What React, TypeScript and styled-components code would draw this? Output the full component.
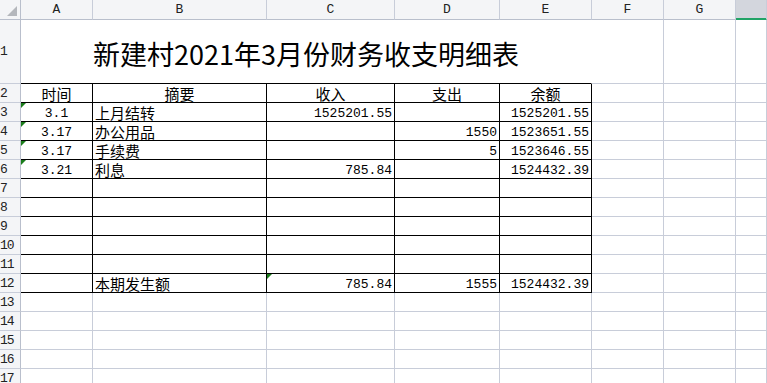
import styled, { createGlobalStyle } from "styled-components";

const GRID = "#c8cdd9";
const HEAD_LINE = "#b9bfcc";
const HEAD_BG = "#f4f5f7";

const GlobalStyle = createGlobalStyle`
  html, body {
    margin: 0;
    padding: 0;
    background: #fff;
  }
  body {
    font-family: "Liberation Mono", "Noto Sans CJK SC", monospace;
    color: #000;
  }
`;

const Sheet = styled.div`
  display: grid;
  grid-template-columns: 21px 72px 174px 128px 105px 92px 72px 72px 1fr;
  grid-template-rows: 20px 64px repeat(16, 19px);
  width: 767px;
  height: 383px;
  overflow: hidden;
`;

const Corner = styled.div`
  background: ${HEAD_BG};
  border-right: 1px solid ${HEAD_LINE};
  border-bottom: 1px solid ${HEAD_LINE};
  display: flex;
  align-items: flex-end;
  justify-content: flex-end;
  padding: 0 3px 3px 0;
`;

const ColHead = styled.div<{ $active?: boolean }>`
  background: ${({ $active }) => ($active ? "#d3d6dd" : HEAD_BG)};
  border-right: 1px solid ${GRID};
  border-bottom: 1px solid ${({ $active }) => ($active ? "#21a366" : HEAD_LINE)};
  box-shadow: ${({ $active }) => ($active ? "inset 0 -1px 0 #21a366" : "none")};
  font: 13px "Liberation Mono", monospace;
  color: #222;
  display: flex;
  align-items: center;
  justify-content: center;
`;

const RowHead = styled.div`
  background: ${HEAD_BG};
  border-right: 1px solid ${HEAD_LINE};
  border-bottom: 1px solid ${GRID};
  font: 13px "Liberation Mono", monospace;
  color: #222;
  display: flex;
  align-items: center;
  overflow: hidden;
  letter-spacing: -1px;
`;

const Cell = styled.div<{ $ruled?: boolean; $align?: "left" | "center" | "right"; $num?: boolean }>`
  position: relative;
  border-right: 1px solid ${({ $ruled }) => ($ruled ? "#000" : GRID)};
  border-bottom: 1px solid ${({ $ruled }) => ($ruled ? "#000" : GRID)};
  display: flex;
  align-items: flex-end;
  justify-content: ${({ $align }) =>
    $align === "center" ? "center" : $align === "right" ? "flex-end" : "flex-start"};
  padding: 0 2px 1px;
  font-family: ${({ $num }) =>
    $num ? `"Liberation Mono", monospace` : `"Noto Sans CJK SC", sans-serif`};
  font-size: ${({ $num }) => ($num ? "13px" : "15px")};
  line-height: 1;
  white-space: nowrap;
  overflow: hidden;
`;

const TitleCell = styled.div`
  grid-column: 2 / 7;
  border-right: 1px solid #fff;
  border-bottom: 1px solid #000;
  display: flex;
  align-items: center;
  justify-content: center;
  padding-top: 4px;
  font-family: "Noto Sans CJK SC", sans-serif;
  font-size: 27px;
  line-height: 1;
`;

const Flag = styled.span`
  position: absolute;
  top: 0;
  left: 0;
  width: 0;
  height: 0;
  border-top: 5px solid #1b7d1b;
  border-right: 5px solid transparent;
`;

const LETTERS = ["A", "B", "C", "D", "E", "F", "G", ""];

type Row = { cells: string[]; flag?: number };

const HEADER = ["时间", "摘要", "收入", "支出", "余额"];

const BODY: Row[] = [
  { cells: ["3.1", "上月结转", "1525201.55", "", "1525201.55"], flag: 0 },
  { cells: ["3.17", "办公用品", "", "1550", "1523651.55"], flag: 0 },
  { cells: ["3.17", "手续费", "", "5", "1523646.55"], flag: 0 },
  { cells: ["3.21", "利息", "785.84", "", "1524432.39"], flag: 0 },
  { cells: ["", "", "", "", ""] },
  { cells: ["", "", "", "", ""] },
  { cells: ["", "", "", "", ""] },
  { cells: ["", "", "", "", ""] },
  { cells: ["", "", "", "", ""] },
  { cells: ["", "本期发生额", "785.84", "1555", "1524432.39"], flag: 2 },
];

const BODY_ALIGN: ("center" | "left" | "right")[] = ["center", "left", "right", "right", "right"];

const CornerMark = () => (
  <svg width="10" height="10" viewBox="0 0 10 10">
    <polygon points="10,0 10,10 0,10" fill="#b4b7bc" />
  </svg>
);

const blanks = (n: number, key: string) =>
  Array.from({ length: n }, (_, i) => <Cell key={`${key}-${i}`} />);

const App = () => {
  const rows: JSX.Element[] = [];

  // 1행: 제목 (A1:E1 병합)
  rows.push(<RowHead key="h1">1</RowHead>);
  rows.push(<TitleCell key="title">新建村2021年3月份财务收支明细表</TitleCell>);
  rows.push(...blanks(3, "r1"));

  // 2행: 표 머리
  rows.push(<RowHead key="h2">2</RowHead>);
  HEADER.forEach((text, i) =>
    rows.push(
      <Cell key={`r2-${i}`} $ruled $align="center">
        {text}
      </Cell>
    )
  );
  rows.push(...blanks(3, "r2"));

  BODY.forEach((row, r) => {
    const n = r + 3;
    rows.push(<RowHead key={`h${n}`}>{n}</RowHead>);
    row.cells.forEach((text, i) => {
      const num = i !== 1;
      rows.push(
        <Cell key={`r${n}-${i}`} $ruled $align={BODY_ALIGN[i]} $num={num}>
          {row.flag === i && <Flag />}
          {text}
        </Cell>
      );
    });
    rows.push(...blanks(3, `r${n}`));
  });

  for (let n = 13; n <= 17; n++) {
    rows.push(<RowHead key={`h${n}`}>{n}</RowHead>);
    rows.push(...blanks(8, `r${n}`));
  }

  return (
    <>
      <GlobalStyle />
      <Sheet>
        <Corner>
          <CornerMark />
        </Corner>
        {LETTERS.map((l, i) => (
          <ColHead key={i} $active={i === 7}>
            {l}
          </ColHead>
        ))}
        {rows}
      </Sheet>
    </>
  );
};

export default App;
